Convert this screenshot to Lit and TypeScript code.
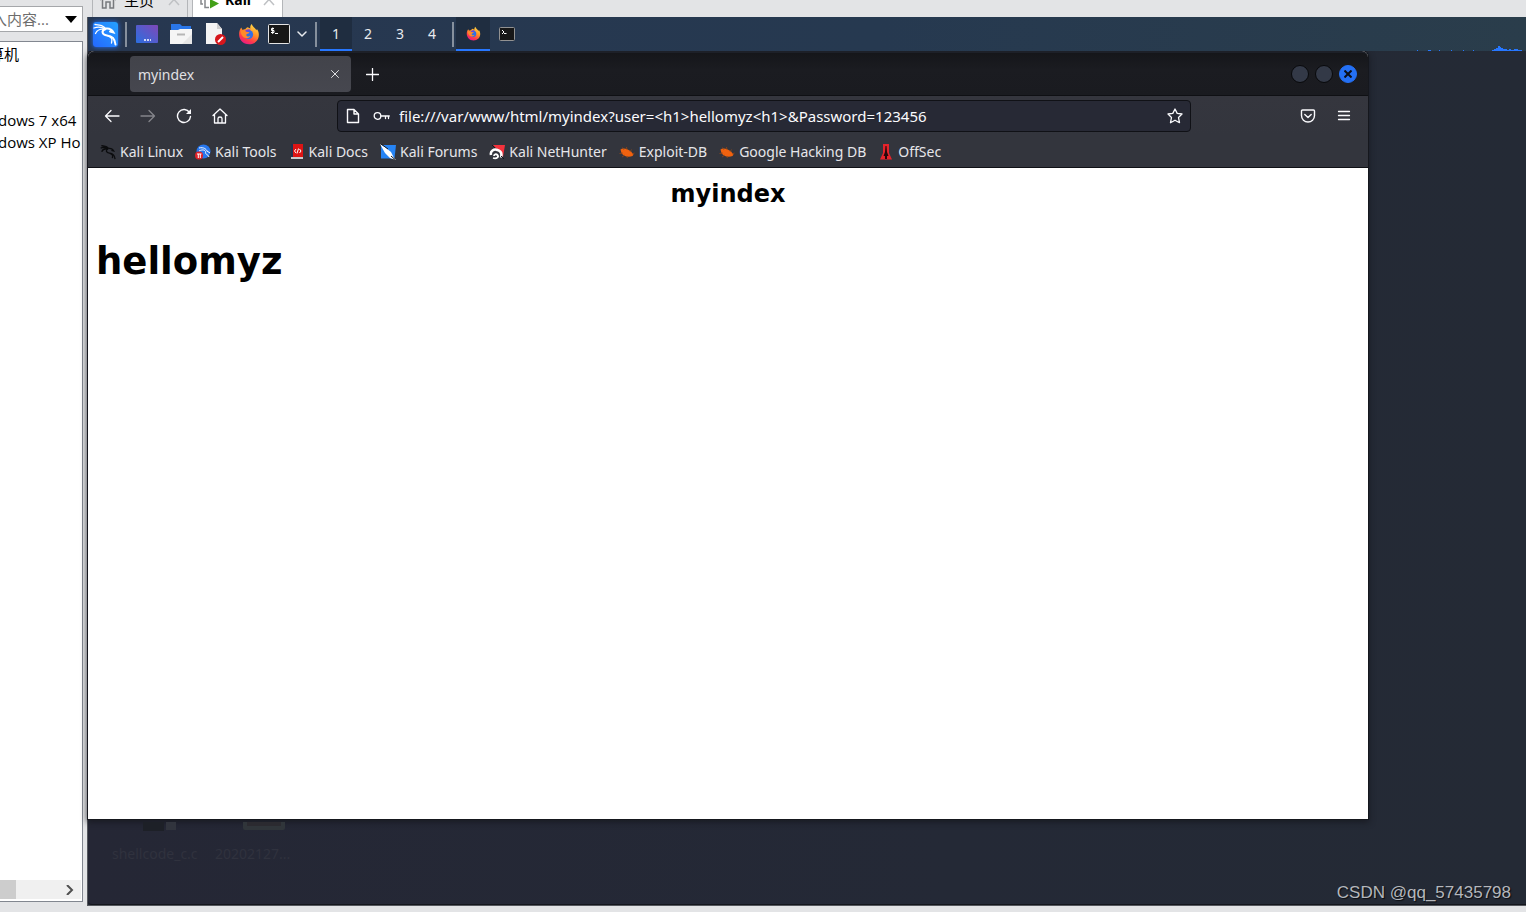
import { LitElement, html, css, svg } from "lit";
import { customElement, state } from "lit/decorators.js";
import { classMap } from "lit/directives/class-map.js";

const dragon = svg`
  <path d="M2 2.500 C7 3 10 3 13 7 M1 6 C5 4.500 9 5 12.500 7.500 M2.500 11.500 C4 8 8 6.500 12 7.500"/>
  <path class="thick" d="M12 7 C8 9 9 13 14 13.500 C20 14 22 17 22.500 22.500"/>
  <path class="thick" d="M13 6.500 C17 6 19 7.500 20.500 10.500 L17 9.500"/>
  <path d="M15 14 C20 16 19 18 18.500 21"/>`;

const firefox = (id: string) => svg`
  <defs>
    <linearGradient id=${id} x1="0.8" y1="0" x2="0.3" y2="1">
      <stop offset="0" stop-color="#ffe14a"/><stop offset="0.45" stop-color="#ff9026"/>
      <stop offset="0.75" stop-color="#ff3c4b"/><stop offset="1" stop-color="#e51a85"/>
    </linearGradient>
  </defs>
  <path fill="url(#${id})" d="M3.500 5 L5 7.500 C6 6.800 7 6.600 8 6.900 C8.700 5.500 9.500 4.800 10.500 4.500 L13.500 6 C13 4 13.700 2.300 15 1 C15.500 4 19 5 20 8 L20.700 6.500 C24 11 23 17 20 20 C15.500 24.500 7.500 24 3.800 19.500 C0 15 .8 8.500 3.500 5Z"/>
  <circle cx="11.500" cy="12.500" r="5" fill="#2f6fe6"/>
  <path d="M7 10 C8 7.500 11 6 14 7.500 L12 9 Z" fill="#7340e0"/>
  <path d="M3 9 C5 8 8 8.500 9 9.500 L12.500 10 C12 12 9.500 11 9 13 C9.500 15 12 15 13.500 14 C13 17 8 17.500 5.500 15 C4 13.500 3 11 3 9Z" fill="#ff8a2a"/>`;

const bug = svg`
  <path d="M1.500 5.500 C4 3.500 8 4.500 12 7.500 L14.500 10.500 L13.500 12 C9 14 4 12 2.500 9Z" fill="#f0620f"/>
  <path d="M5 6 L3.500 3.500 M8 6 L7.500 3 M11 8 L12.500 5.500 M13 10 L15.500 9 M4 9 L.5 9.500 M6 11 L3 13 M9 12 L8 14" stroke="#a04a12" stroke-width=".7" fill="none"/>`;

const bookmarks = [
  { label: "Kali Linux", icon: svg`<g transform="scale(.67)" class="ink">${dragon}</g>` },
  {
    label: "Kali Tools",
    icon: svg`<circle cx="8.500" cy="7.500" r="7" fill="#2777ee"/>
      <path d="M4 4 C9 3 11 5 12 7 L15 9 M4 7 C8 5 10 6 11 8 C9 10 13 10 14 13" fill="none" stroke="#fff"/>
      <circle cx="4" cy="11.500" r="4" fill="#e02128"/>
      <path d="M2 10 H6.500 M3.300 10 V14 M5.300 10 V14" fill="none" stroke="#fff"/>`,
  },
  {
    label: "Kali Docs",
    icon: svg`<path d="M2 0 H14 V13 H2Z" fill="#dd1414"/><path d="M2 0 H4 V15 H2Z" fill="#24314f"/>
      <path d="M2 13 H14 V15 H2Z" fill="#c9c9cc"/>
      <path d="M7 5 L5.500 7 L7 9 M10.500 5 L12 7 L10.500 9 M9.500 4.500 L8 9.500" fill="none" stroke="#fff"/>`,
  },
  {
    label: "Kali Forums",
    icon: svg`<path d="M1 1 H16 L14.500 14.500 H1Z" fill="#2684f5"/>
      <path d="M0 0 L6 4 L11 8 L14 14 L16 16 L10 14 L5 9Z" fill="#fff"/>
      <path d="M1 0 L8 5 M11 12 L15 15.500" stroke="#17191e"/>`,
  },
  {
    label: "Kali NetHunter",
    icon: svg`<path d="M4 1 H16 L14 13 L9 6Z" fill="#f4323c"/>
      <path d="M2 11 C1 7 5 4.500 8.500 6 C12 7 13 10 12 13.500" fill="none" stroke="#fff" stroke-width="2.500"/>
      <path d="M4 14 C8 15 10 13 8.500 11 C7 9.500 5 10.500 5 12" fill="none" stroke="#fff" stroke-width="1.800"/>
      <path d="M3 1 L6 4 M12 12 L15 15" stroke="#15161a"/>`,
  },
  { label: "Exploit-DB", icon: bug },
  { label: "Google Hacking DB", icon: bug },
  {
    label: "OffSec",
    icon: svg`<path d="M5 0 H11 V9 L14 15.500 H2 L5 9Z" fill="#e5232b"/>
      <path d="M7.500 2 H8.500 L9 8 L10.500 12 L9 12 V15 H7 V12 L5.500 12 L7 8Z" fill="#26080b"/>`,
  },
];

@customElement("app-root")
export class AppRoot extends LitElement {
  @state() private workspace = 1;

  static styles = css`
    :host {
      display: grid;
      grid-template-columns: 83px minmax(0, 1fr);
      column-gap: 4px;
      height: 100vh;
      overflow: hidden;
      background: #e3e4e6;
      font-family: "Noto Sans", "Noto Sans CJK SC", sans-serif;
      font-size: 14px;
    }
    * { box-sizing: border-box; }
    button, input { font: inherit; color: inherit; border: 0; padding: 0; background: none; }
    svg { display: block; flex: none; }
    ul { margin: 0; padding: 0; list-style: none; }

    .library {
      display: flex;
      flex-direction: column;
      gap: 9px;
      padding: 6px 0 10px;
      min-width: 0;
      font-family: "Open Sans", "Noto Sans CJK SC", sans-serif;
      font-size: 15px;
    }
    .search {
      display: flex;
      align-items: center;
      height: 26px;
      background: #fff;
      border: 1px solid #a5a7aa;
      border-left: 0;
    }
    .search input { flex: 1; min-width: 0; height: 24px; text-indent: -8px; outline: 0; }
    .search input::placeholder { color: #6d6d6d; opacity: 1; }
    .search button { width: 22px; height: 24px; display: grid; place-items: center; }
    .tree {
      flex: 1;
      display: flex;
      flex-direction: column;
      background: #fff;
      border: 1px solid #828790;
      border-left: 0;
      overflow: hidden;
      color: #000;
    }
    .tree ul { flex: 1; padding-top: 1px; }
    .tree li { height: 22px; line-height: 22px; white-space: nowrap; overflow: hidden; }
    .tree .pc { text-indent: -11px; margin-bottom: 44px; }
    .tree .vm { text-indent: -2px; }
    .scroll { display: flex; align-items: center; height: 19px; margin: 0 1px 2px 0; background: #f0f0f0; }
    .thumb { width: 16px; height: 19px; background: #cdcdcd; }
    .scroll button { margin-left: auto; width: 22px; height: 19px; display: grid; place-items: center; }

    .machine { display: grid; grid-template-rows: 17px minmax(0, 1fr); padding-bottom: 6px; min-width: 0; }
    .tabs { display: flex; gap: 4px; padding-left: 5px; overflow: hidden; align-items: flex-end; }
    .vmtab {
      display: flex;
      align-items: flex-end;
      gap: 8px;
      height: 17px;
      padding: 0 7px;
      border: solid #b4b6b9;
      border-width: 0 1px;
      color: #000;
      overflow: hidden;
      font-size: 15px;
    }
    .vmtab svg { margin-bottom: 8px; }
    .vmtab .name { line-height: 20px; margin-bottom: 7px; }
    .vmtab .shut { margin: 0 0 11px 6px; }
    .vmtab.open { background: #fff; font-weight: 700; gap: 6px; font-size: 14px; }

    .guest { display: flex; flex-direction: column; min-width: 0; border-left: 1px solid #55585e; border-bottom: 1px solid #55585e; background: #242a36; }
    .panel {
      position: relative;
      z-index: 1;
      display: flex;
      align-items: center;
      height: 34px;
      flex: none;
      padding-left: 4px;
      background: linear-gradient(90deg, #273750, #263950 55%, #2a3d4b);
      color: #e8ebef;
      font-size: 14px;
    }
    .panel button { display: grid; place-items: center; height: 34px; width: 34px; flex: none; }
    .panel .menu { width: 27px; margin-right: 6px; }
    .logo { border-radius: 3px; background: linear-gradient(45deg, #2468ff, #25a0ff); box-shadow: 0 0 5px #2472ff; }
    .sep { width: 2px; height: 25px; background: #86909d; flex: none; }
    .panel .launch { margin-left: 3px; }
    .panel .term { width: 26px; }
    .panel .more { width: 20px; margin-right: 3px; }
    .spaces { display: flex; margin: 0 4px 0 3px; }
    .panel .space { width: 32px; border-bottom: 2px solid transparent; }
    .panel .space.on, .panel .task.on { background: #1f2d40; border-bottom: 2px solid #2777ff; }
    .tasks { display: flex; margin-left: 2px; }
    .graph { margin-left: auto; align-self: flex-end; }

    .desk {
      flex: 1;
      min-height: 0;
      display: flex;
      flex-direction: column;
      background: linear-gradient(90deg, #252735, #242936 60%, #242a35);
      border-bottom: 1px solid #14161c;
      padding-right: 158px;
      border-bottom-left-radius: 4px;
    }
    .browser {
      flex: 1;
      min-height: 0;
      display: flex;
      flex-direction: column;
      background: #fff;
      border-radius: 6px 6px 0 0;
      box-shadow: 0 0 0 1px #15171d, 0 2px 6px 1px #15171dcc;
      color: #fbfbfe;
    }
    .titlebar {
      display: flex;
      align-items: center;
      height: 45px;
      padding: 0 11px 0 42px;
      background: linear-gradient(#15161a, #1b1c21 40%, #1a1b20);
      border-top: 2px solid #1d2028;
      border-bottom: 1px solid #0f1014;
      border-radius: 6px 6px 0 0;
    }
    .tab {
      display: flex;
      align-items: center;
      justify-content: space-between;
      width: 221px;
      height: 36px;
      padding: 0 6px 0 8px;
      border-radius: 4px;
      background: linear-gradient(#42434a, #46474f);
      color: #e0e0e3;
    }
    .tab button { width: 20px; height: 20px; display: grid; place-items: center; }
    .plus { width: 42px; height: 36px; display: grid; place-items: center; }
    .wm { display: flex; gap: 6px; margin-left: auto; }
    .wm button { width: 18px; height: 18px; border-radius: 50%; background: #333947; border: 1px solid #08090b; display: grid; place-items: center; }
    .wm .quit { background: #2470f5; border-color: #2470f5; }
    .nav { display: flex; align-items: center; height: 40px; padding: 0 6px; background: linear-gradient(#35363e, #33353d); }
    .nav button { width: 36px; height: 36px; display: grid; place-items: center; }
    .space-fill { flex: 99; }
    .url {
      flex: 838;
      display: flex;
      align-items: center;
      gap: 12px;
      height: 32px;
      min-width: 0;
      padding: 0 7px;
      border: 1px solid #101116;
      border-radius: 4px;
      background: #272935;
    }
    .url input { flex: 1; min-width: 0; height: 30px; margin-left: -3px; font-size: 15px; outline: 0; }
    .nav .url button { width: 16px; height: 30px; }
    .marks { display: flex; gap: 12px; height: 32px; padding: 0 12px; background: #33353d; border-bottom: 1px solid #101116; overflow: hidden; color: #e6e6ea; }
    .marks a { display: flex; align-items: center; gap: 4px; color: inherit; text-decoration: none; white-space: nowrap; }
    .line { fill: none; stroke: currentColor; stroke-linecap: round; stroke-linejoin: round; }
    .ink { fill: none; stroke: #0b0c0e; stroke-width: 2; }
    .white { fill: none; stroke: #fff; stroke-width: 1.3; stroke-linecap: round; }
    .thick { stroke-width: 2; }
    .page { flex: 1; padding: 11px 8px; color: #000; font-family: "DejaVu Sans", sans-serif; overflow: hidden; }
    .page h1 { margin: 0; text-align: center; font-size: 24px; line-height: 30px; }
    .page h2 { margin: 30px 0 0; font-size: 37px; line-height: 46px; }

    .files { display: flex; height: 85px; flex: none; justify-content: space-between; margin-right: -158px; padding: 3px 15px 0 24px; }
    .icons { display: flex; gap: 16px; color: #30323e; font-size: 14px; }
    .file { width: 87px; white-space: nowrap; line-height: 20px; }
    .file svg { margin: 0 0 12px 28px; }
    .mark { align-self: flex-end; color: #b4b7bc; font-family: "Liberation Sans", sans-serif; font-size: 17px; line-height: 22px; text-shadow: 1px 1px 1px #0b0d11; }
  `;

  render() {
    return html`
      <aside class="library">
        <div class="search">
          <input type="text" aria-label="搜索" placeholder="入内容..." />
          <button aria-label="展开"><svg width="12" height="7"><path d="M0 0 H12 L6 7Z"/></svg></button>
        </div>
        <div class="tree">
          <ul>
            <li class="pc">算机</li>
            <li class="vm">dows 7 x64</li>
            <li class="vm">dows XP Ho</li>
          </ul>
          <div class="scroll">
            <span class="thumb"></span>
            <button aria-label="向右"><svg width="8" height="10"><path d="M1 0 L6 5 L1 10" fill="none" stroke="#505050" stroke-width="2"/></svg></button>
          </div>
        </div>
      </aside>

      <main class="machine">
        <div class="tabs">
          <div class="vmtab">
            <svg width="16" height="14" viewBox="0 0 16 14"><path d="M0 5 L3 2 M2.500 1 V13 H6 V7 H10 V13 H13.500 V1 M13 2 L16 5" fill="none" stroke="#77797d" stroke-width="1.500"/></svg>
            <span class="name">主页</span>
            <svg class="shut" width="12" height="12"><path d="M1 0 L11 11 M11 0 L1 11" stroke="#bfc1c4" stroke-width="1.500"/></svg>
          </div>
          <div class="vmtab open">
            <svg width="19" height="14" viewBox="0 0 19 14"><path d="M1 0 V9 H3 M5 0 V12.500 H9 M14 0 V3" fill="none" stroke="#85878b" stroke-width="1.500"/><path d="M10 4 L19 8.500 L10 13.500Z" fill="#43a018"/></svg>
            <span class="name">Kali</span>
            <svg class="shut" width="12" height="12"><path d="M1 0 L11 11 M11 0 L1 11" stroke="#bfc1c4" stroke-width="1.500"/></svg>
          </div>
        </div>

        <div class="guest">
          <div class="panel">
            <button class="menu" aria-label="Applications"><svg class="logo" width="25" height="25" viewBox="0 0 25 25"><g class="white">${dragon}</g></svg></button>
            <span class="sep"></span>
            <button class="launch" aria-label="Show desktop">
              <svg width="22" height="18"><defs><linearGradient id="dk" x1="0" x2="1" y1="1" y2="0"><stop stop-color="#2a6fe0"/><stop offset="1" stop-color="#7f48b8"/></linearGradient></defs><rect width="22" height="18" rx="1" fill="url(#dk)"/><path d="M8 15 h2 M11 15 h2 M14 15 h1" stroke="#fff" stroke-width="1.500"/></svg>
            </button>
            <button aria-label="Files">
              <svg width="22" height="20"><path d="M1 0 H10 L12 2 H21 V8 H1Z" fill="#2a76e8"/><path d="M0 6 H8 L10 5 H22 V20 H0Z" fill="#f5f5f5"/><path d="M22 10 V20 H12Z" fill="#e6e6e6"/><path d="M7 10.500 H15" stroke="#b6b6b6" stroke-width="2"/></svg>
            </button>
            <button aria-label="Text editor">
              <svg width="21" height="22"><path d="M1 0 H12 L17 6 V21 H1Z" fill="#f4f4f4"/><path d="M12 0 V6 H17Z" fill="#cfcfcf"/><circle cx="15.500" cy="16.500" r="5.500" fill="#d6161c"/><path d="M13 19 L18 14" stroke="#fff" stroke-width="2"/></svg>
            </button>
            <button aria-label="Firefox"><svg width="22" height="22" viewBox="0 0 24 24">${firefox("fa")}</svg></button>
            <button class="term" aria-label="Terminal">
              <svg width="22" height="20"><rect x=".5" y=".5" width="21" height="19" rx="1" fill="#171717" stroke="#e4e4e4"/><path d="M6 4.500 H3.500 V6.500 H6 V8.500 H3 M4.700 3.500 V10 M7 9.500 H10" fill="none" stroke="#fff"/></svg>
            </button>
            <button class="more" aria-label="More terminals"><svg width="10" height="6"><path d="M1 1 L5 5 L9 1" class="line" stroke-width="1.500"/></svg></button>
            <span class="sep"></span>
            <div class="spaces">
              ${[1, 2, 3, 4].map((n) => html`<button class=${classMap({ space: true, on: n === this.workspace })} @click=${() => (this.workspace = n)}>${n}</button>`)}
            </div>
            <span class="sep"></span>
            <div class="tasks">
              <button class="task on" aria-label="Firefox window"><svg width="15" height="15" viewBox="0 0 24 24">${firefox("fb")}</svg></button>
              <button class="task" aria-label="Terminal window"><svg width="16" height="14"><rect x=".5" y=".5" width="15" height="13" rx="1" fill="#171717" stroke="#929292"/><path d="M3 3 L5 5 L3 7 M5 6.500 H7.500" fill="none" stroke="#fff"/></svg></button>
            </div>
            <svg class="graph" width="112" height="6"><path fill="#2777ff" d="M3 5h1v1h-1z M14 5h3v1h-3z M25 5h1v1h-1z M37 5h1v1h-1z M49 5h1v1h-1z M59 5h1v1h-1z M78 6V5h2V4h2V3h2V1h2V2h1V3h2V4h4V5h2V4h2V5h3V4h4V5h4V6z"/></svg>
          </div>

          <div class="desk">
            <section class="browser">
              <div class="titlebar">
                <div class="tab"><span>myindex</span><button aria-label="Close tab"><svg width="10" height="10"><path class="line" d="M1.500 1.500 L8.500 8.500 M8.500 1.500 L1.500 8.500"/></svg></button></div>
                <button class="plus" aria-label="New tab"><svg width="13" height="13"><path d="M6.500 .5 V12.500 M.5 6.500 H12.500" class="line" stroke-width="1.300"/></svg></button>
                <div class="wm">
                  <button aria-label="Minimize"></button>
                  <button aria-label="Maximize"></button>
                  <button class="quit" aria-label="Close"><svg width="8" height="8"><path d="M.5 .5 L7.500 7.500 M7.500 .5 L.5 7.500" stroke="#0b0f18" stroke-width="2"/></svg></button>
                </div>
              </div>
              <div class="nav">
                <button aria-label="Back"><svg width="16" height="16"><path class="line" stroke-width="1.300" d="M15 8 H1.500 M7 2.500 L1.500 8 L7 13.500"/></svg></button>
                <button aria-label="Forward"><svg width="16" height="16" opacity=".4"><path class="line" stroke-width="1.300" d="M1 8 H14.500 M9 2.500 L14.500 8 L9 13.500"/></svg></button>
                <button aria-label="Reload"><svg width="16" height="16"><path class="line" stroke-width="1.400" d="M13.500 4.500 A6.500 6.500 0 1 0 14.500 8.500"/><path d="M15 1 V6 H10Z" fill="currentColor"/></svg></button>
                <button aria-label="Home"><svg width="16" height="16"><path class="line" stroke-width="1.300" d="M1 7.500 L8 1 L15 7.500 M2.500 6.500 V15 H13.500 V6.500 M6 15 V10.500 Q6 9 8 9 Q10 9 10 10.500 V15"/></svg></button>
                <span class="space-fill"></span>
                <div class="url">
                  <svg width="16" height="16"><path class="line" stroke-width="1.400" d="M2.500 1.500 H9 L13.500 6 V14.500 H2.500Z M9 1.500 V6 H13.500"/></svg>
                  <svg width="17" height="16"><path class="line" stroke-width="1.300" d="M8 8 H16.300 M12.500 8 V10.500 M15.500 8 V10.500"/><circle class="line" cx="4.500" cy="8" r="3.300" stroke-width="1.300"/></svg>
                  <input type="text" aria-label="Address" .value=${"file:///var/www/html/myindex?user=<h1>hellomyz<h1>&Password=123456"} />
                  <button aria-label="Bookmark"><svg width="16" height="16"><path class="line" stroke-width="1.300" d="M8 1 L10.200 5.400 L15 6 L11.500 9.500 L12.500 14.700 L8 12.200 L3.500 14.700 L4.500 9.500 L1 6 L5.800 5.400Z"/></svg></button>
                </div>
                <span class="space-fill"></span>
                <button aria-label="Pocket"><svg width="16" height="16"><path class="line" stroke-width="1.400" d="M2.500 2 H13.500 Q14.500 2 14.500 3 V7.500 C14.500 11.500 11.500 14 8 14 C4.500 14 1.500 11.500 1.500 7.500 V3 Q1.500 2 2.500 2Z M4.800 6.500 L8 9.500 L11.200 6.500"/></svg></button>
                <button aria-label="Menu"><svg width="14" height="16"><path class="line" stroke-width="1.300" d="M1.500 3.500 H12.500 M1.500 7.500 H12.500 M1.500 11.500 H12.500"/></svg></button>
              </div>
              <nav class="marks">
                ${bookmarks.map((b) => html`<a href="#"><svg width="16" height="16" viewBox="0 0 16 16">${b.icon}</svg>${b.label}</a>`)}
              </nav>
              <article class="page">
                <h1>myindex</h1>
                <h2>hellomyz</h2>
              </article>
            </section>
            <div class="files">
              <div class="icons">
                <div class="file"><svg width="40" height="10"><path d="M3 0 H24 V9 H3Z" fill="#1d2027"/><path d="M26 0 H36 V8 H26Z" fill="#31343d"/></svg>shellcode_c.c</div>
                <div class="file"><svg width="42" height="10"><path d="M0 0 H42 V6 Q42 8 40 8 H2 Q0 8 0 6Z" fill="#30353a"/><path d="M4 0 H38 V4 H4Z" fill="#2b2a30"/></svg>20202127...</div>
              </div>
              <span class="mark">CSDN @qq_57435798</span>
            </div>
          </div>
        </div>
      </main>
    `;
  }
}
